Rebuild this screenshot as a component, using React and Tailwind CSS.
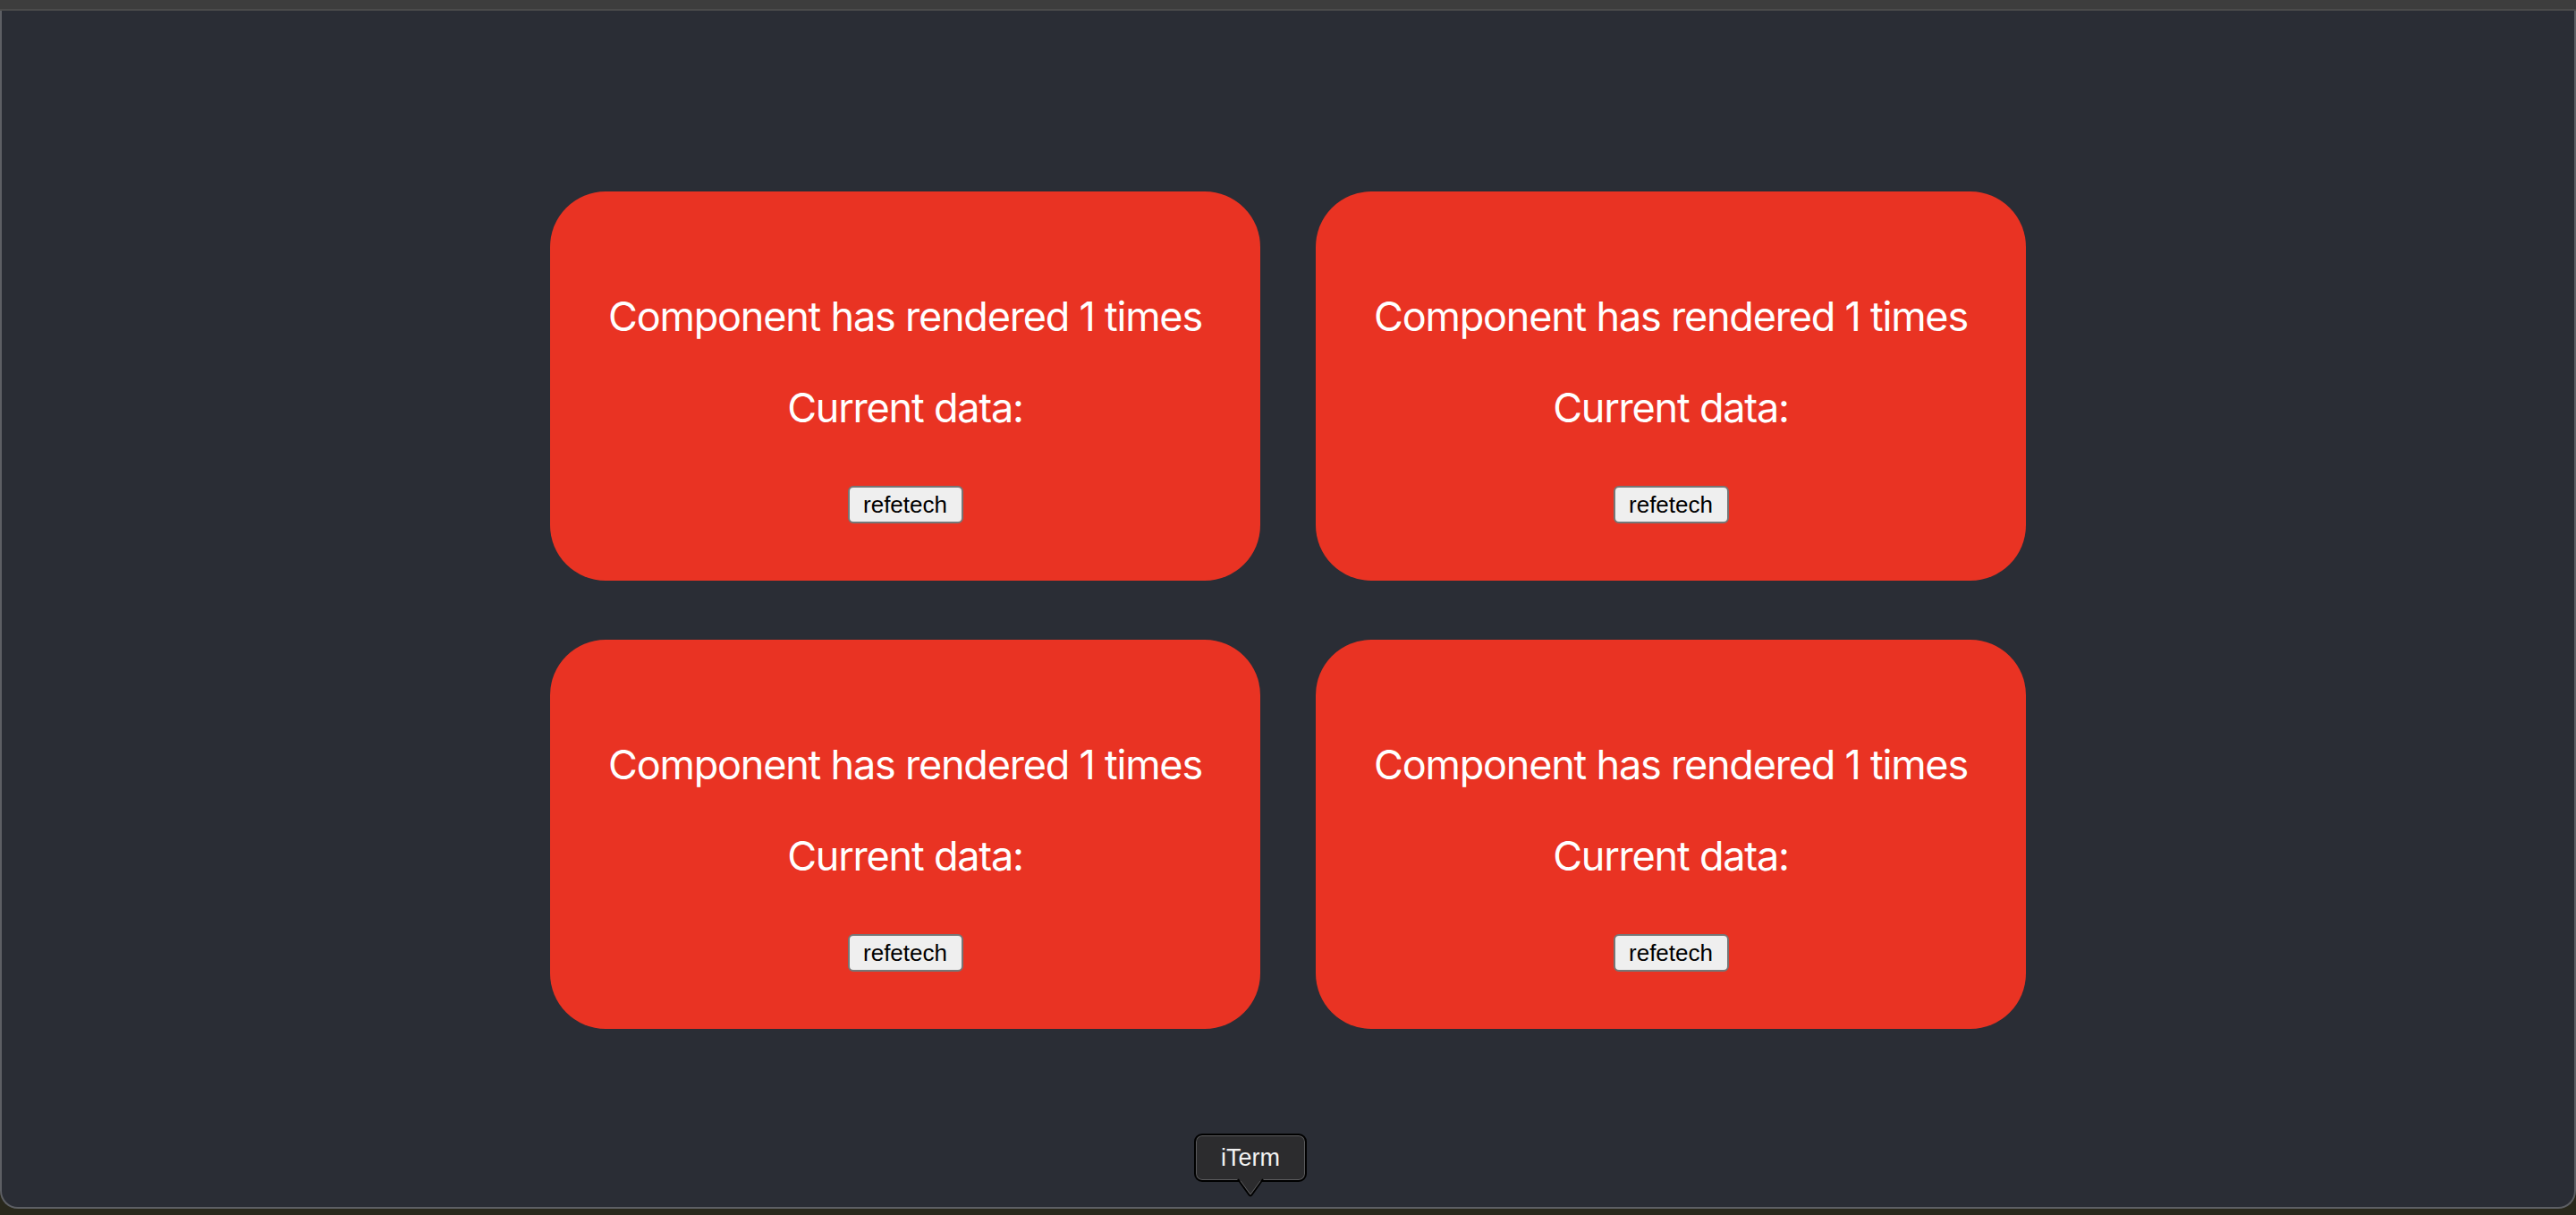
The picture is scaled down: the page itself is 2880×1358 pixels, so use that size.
const cards = [1, 2, 3, 4];

function RenderCard() {
  return (
    <div className="h-[435px] rounded-[62px] bg-[#e93323] pt-[112px] flex flex-col items-center">
      <p className="font-['Inter',sans-serif] text-[45px] leading-[56px] tracking-[-0.027em] text-white">
        Component has rendered 1 times
      </p>
      <p className="mt-[46px] font-['Inter',sans-serif] text-[45px] leading-[56px] tracking-[-0.027em] text-white">
        Current data:
      </p>
      <button
        type="button"
        className="mt-[59px] flex h-[42px] w-[129px] items-center justify-center rounded-[6px] border-2 border-[#767676] bg-[#efefef] font-['Liberation_Sans',Arial,sans-serif] text-[26px] text-black"
      >
        refetech
      </button>
    </div>
  );
}

export default function App() {
  return (
    <div className="flex h-[1358px] flex-col bg-[#29281c]">
      {/* browser chrome edge */}
      <div className="h-[12px] border-b-2 border-[#4b4b4b] bg-[#3d3d3d]" />

      <div className="relative h-[1339px] rounded-b-[20px] border-x-2 border-b-2 border-[#5d5f64] bg-[#2a2d35] pt-[202px]">
        <div className="grid grid-cols-[794px_794px] justify-center gap-x-[62px] gap-y-[66px]">
          {cards.map(id => (
            <RenderCard key={id} />
          ))}
        </div>

        {/* dock tooltip */}
        <div className="absolute left-[1333px] top-[1255px] h-[72px] w-[126px]">
          <div className="flex h-[54px] w-[126px] items-center justify-center rounded-[9px] border-2 border-black bg-[#2c2c2e] shadow-[inset_0_0_0_1px_#5a5a5c]">
            <span className="font-['Liberation_Sans',Arial,sans-serif] text-[27px] text-[#f2f2f2]">iTerm</span>
          </div>
          <svg className="absolute left-[48px] top-[50px]" width="30" height="22" viewBox="0 0 30 22">
            <path d="M1 1 L13.5 18.5 Q15 20.5 16.5 18.5 L29 1" fill="#2c2c2e" stroke="#000" strokeWidth="2" />
            <path d="M4 3 L15 18 L26 3" fill="none" stroke="#5a5a5c" strokeWidth="1" />
            <rect x="3" y="0" width="24" height="3" fill="#2c2c2e" />
          </svg>
        </div>
      </div>
    </div>
  );
}
